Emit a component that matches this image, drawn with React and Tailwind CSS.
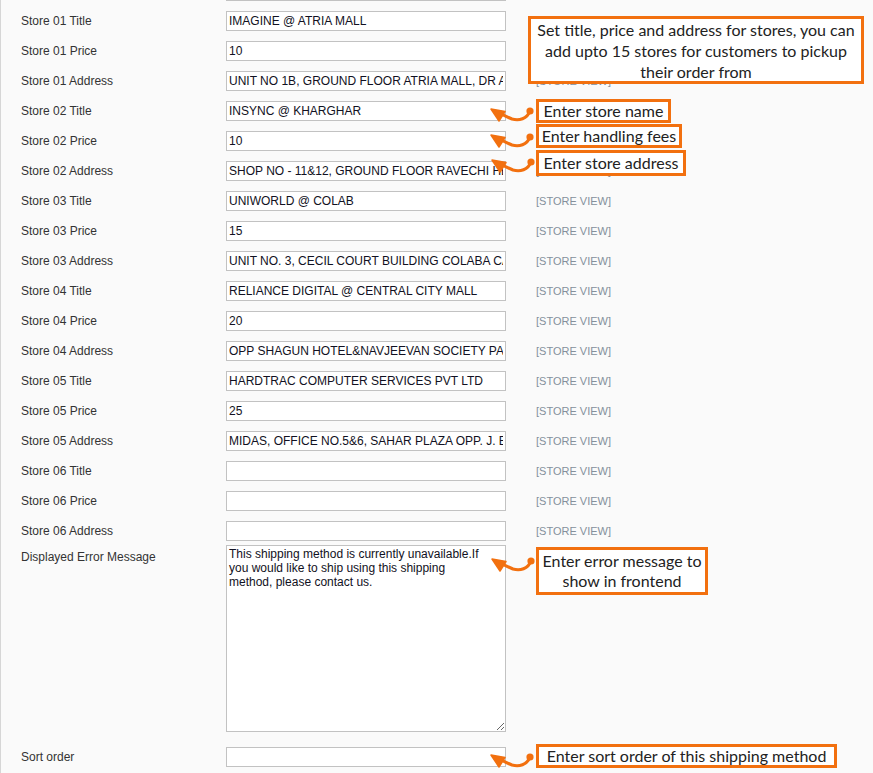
/**
 * App.jsx
 * Store pickup shipping settings form, with annotation callouts on top.
 */

const ORANGE = '#f2700f'

const stores = [
  { title: 'IMAGINE @ ATRIA MALL', price: '10', address: 'UNIT NO 1B, GROUND FLOOR ATRIA MALL, DR ANNIE BESANT ROAD' },
  { title: 'INSYNC @ KHARGHAR', price: '10', address: 'SHOP NO - 11&12, GROUND FLOOR RAVECHI HEIGHTS' },
  { title: 'UNIWORLD @ COLAB', price: '15', address: 'UNIT NO. 3, CECIL COURT BUILDING COLABA CAUSEWAY' },
  { title: 'RELIANCE DIGITAL @ CENTRAL CITY MALL', price: '20', address: 'OPP SHAGUN HOTEL&NAVJEEVAN SOCIETY PANDAV NAGAR' },
  { title: 'HARDTRAC COMPUTER SERVICES PVT LTD', price: '25', address: 'MIDAS, OFFICE NO.5&6, SAHAR PLAZA OPP. J. B. NAGAR' },
  { title: '', price: '', address: '' },
]

const inputCls =
  'w-[280px] h-[20px] bg-white border border-[#c2c2c2] px-[2px] text-[12px] text-[#111122] outline-none'

function Row({ label, value, scope = true }) {
  return (
    <div className="flex items-center h-[30px]">
      <label className="w-[225px] pl-[20px] text-[12px] text-[#333]">{label}</label>
      <input type="text" readOnly value={value} className={inputCls} />
      {scope && (
        <span className="ml-[30px] text-[11px] text-[#84909c]">[STORE VIEW]</span>
      )}
    </div>
  )
}

// Curved orange pointer: dot on the right, arrowhead on the left
function Pointer({ x, y }) {
  return (
    <svg
      className="absolute"
      style={{ left: x - 41, top: y - 9 }}
      width="46" height="22" viewBox="0 0 46 22" aria-hidden="true"
    >
      <path
        d="M41 9 C38 17 30 19 23 17 C18 15 14 13 9 10"
        fill="none" stroke={ORANGE} strokeWidth="3.2" strokeLinecap="round"
      />
      <polygon points="2,7 16,9.5 10,19" fill={ORANGE} stroke={ORANGE} strokeWidth="1.5" strokeLinejoin="round" />
      <circle cx="41" cy="9" r="3.6" fill={ORANGE} />
    </svg>
  )
}

function Callout({ className, wrap = false, children }) {
  return (
    <div
      className={[
        'absolute bg-white border-[3px] border-[#f2700f] flex items-center justify-center',
        'text-center text-[#222]',
        wrap ? 'whitespace-normal' : 'whitespace-nowrap',
        className,
      ].join(' ')}
      style={{ fontFamily: 'Lato, "Noto Sans", sans-serif' }}
    >
      {children}
    </div>
  )
}

export default function App() {
  const rows = []
  stores.forEach((s, i) => {
    const n = String(i + 1).padStart(2, '0')
    rows.push({ label: `Store ${n} Title`, value: s.title })
    rows.push({ label: `Store ${n} Price`, value: s.price })
    rows.push({ label: `Store ${n} Address`, value: s.address })
  })

  return (
    <div
      className="relative w-[873px] h-[773px] overflow-hidden bg-[#fafafa] border-l border-[#d6d6d6]"
      style={{ fontFamily: '"Liberation Sans", Arial, sans-serif' }}
    >
      <div className="pt-[6px]">
        {/* row cut off at the top of the screenshot */}
        <div className="mt-[-30px]">
          <Row label="" value="" scope={false} />
        </div>

        {rows.map((r) => (
          <Row key={r.label} label={r.label} value={r.value} />
        ))}

        {/* Error message */}
        <div className="flex mt-[-1px]">
          <label className="w-[225px] pl-[20px] pt-[3px] text-[12px] text-[#333]">
            Displayed Error Message
          </label>
          <textarea
            readOnly
            value="This shipping method is currently unavailable.If you would like to ship using this shipping method, please contact us."
            className="w-[280px] h-[187px] bg-white border border-[#c2c2c2] pl-[2px] pr-[16px] pt-[1px] text-[12px] leading-[14px] text-[#111122] outline-none"
          />
        </div>

        {/* Sort order */}
        <div className="flex items-center mt-[15px] h-[20px]">
          <label className="w-[225px] pl-[20px] text-[12px] text-[#333]">Sort order</label>
          <input type="text" readOnly value="" className={inputCls} />
        </div>
      </div>

      {/* ---------------------------------------------------------------- */}
      {/* Annotations                                                       */}
      {/* ---------------------------------------------------------------- */}
      <Callout wrap className="left-[527px] top-[16px] w-[336px] h-[68px] px-[6px] text-[16px] leading-[21px]">
        Set title, price and address for stores, you can add upto 15 stores for customers to pickup their order from
      </Callout>

      <Callout className="left-[535px] top-[99px] w-[135px] h-[24px] text-[16px]">Enter store name</Callout>
      <Callout className="left-[535px] top-[124px] w-[146px] h-[24px] text-[16px]">Enter handling fees</Callout>
      <Callout className="left-[535px] top-[150px] w-[150px] h-[26px] text-[16px]">Enter store address</Callout>
      <Callout wrap className="left-[535px] top-[547px] w-[172px] h-[48px] text-[16px] leading-[20px]">
        Enter error message to<br />show in frontend
      </Callout>
      <Callout className="left-[535px] top-[744px] w-[301px] h-[24px] text-[16px]">
        Enter sort order of this shipping method
      </Callout>

      <Pointer x={529} y={111} />
      <Pointer x={529} y={137} />
      <Pointer x={530} y={162} />
      <Pointer x={530} y={561} />
      <Pointer x={529} y={757} />
    </div>
  )
}
